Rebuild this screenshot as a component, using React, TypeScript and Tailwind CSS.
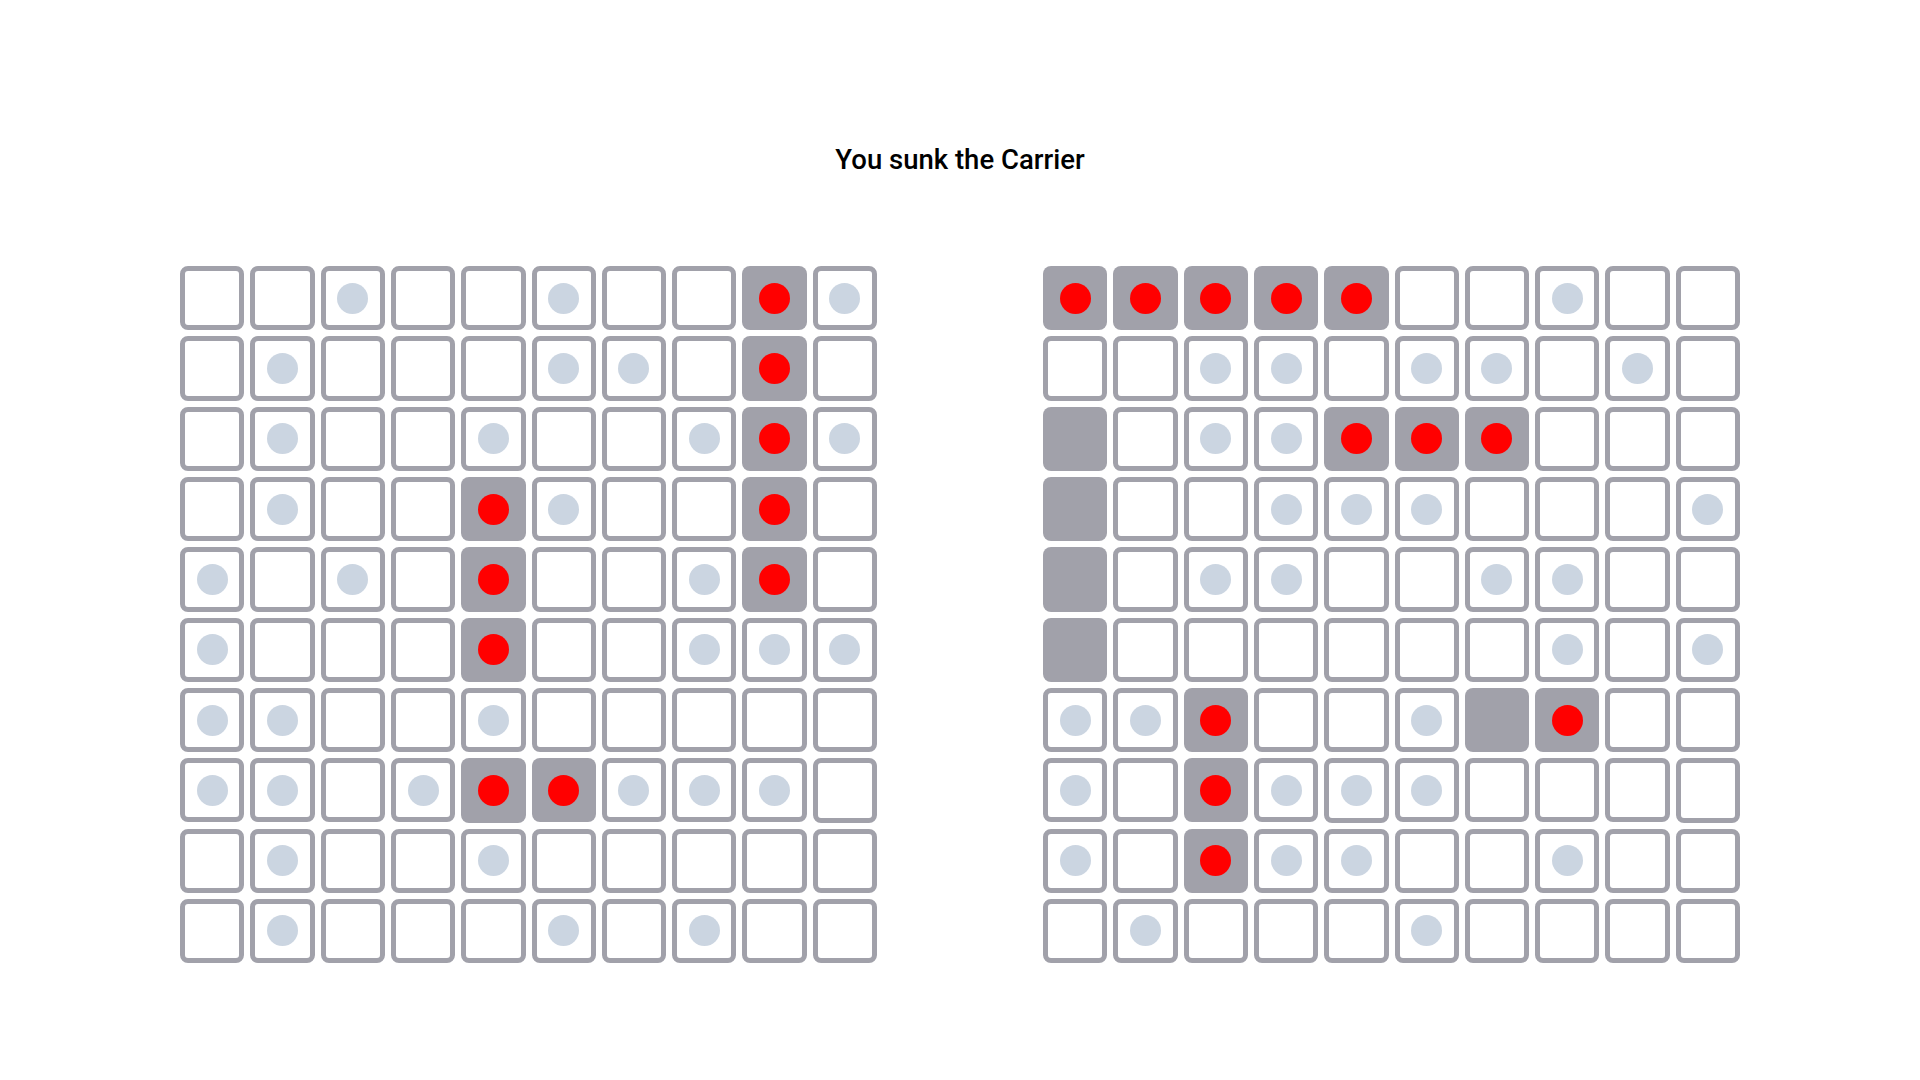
import React from "react";

// . empty, o miss, x hit, s ship (not hit)
const playerBoard = [
	"..o..o..xo",
	".o...oo.x.",
	".o..o..oxo",
	".o..xo..x.",
	"o.o.x..ox.",
	"o...x..ooo",
	"oo..o.....",
	"oo.oxxooo.",
	".o..o.....",
	".o...o.o..",
];

const enemyBoard = [
	"xxxxx..o..",
	"..oo.oo.o.",
	"s.ooxxx...",
	"s..ooo...o",
	"s.oo..oo..",
	"s......o.o",
	"oox..osx..",
	"o.xooo....",
	"o.xoo..o..",
	".o...o....",
];

function Cell({ value }: { value: string }) {
	const filled = value == "x" || value == "s";
	return (
		<div
			className={
				"aspect-square rounded-lg flex items-center justify-center " +
				(filled
					? "bg-[#a1a1aa]"
					: "bg-white border-[5px] border-[#a1a1aa]")
			}
		>
			{value == "x" && (
				<div className="w-[31px] h-[31px] rounded-full bg-[#ff0000]"></div>
			)}
			{value == "o" && (
				<div className="w-[31px] h-[31px] rounded-full bg-[#cbd5e1]"></div>
			)}
		</div>
	);
}

function Board({ rows }: { rows: string[] }) {
	return (
		<div className="grid grid-cols-10 gap-[6px] w-[697px]">
			{rows.map((row, r) =>
				row.split("").map((v, c) => <Cell key={r + "-" + c} value={v} />)
			)}
		</div>
	);
}

export default function App() {
	return (
		<div
			className="flex flex-col items-center w-full min-h-screen bg-white pt-[142px]"
			style={{ fontFamily: "Roboto, 'Liberation Sans', sans-serif" }}
		>
			<h1 className="text-[27.5px] leading-[36px] font-medium text-black">
				You sunk the Carrier
			</h1>
			<div className="flex flex-row gap-[166px] mt-[88px]">
				<Board rows={playerBoard} />
				<Board rows={enemyBoard} />
			</div>
		</div>
	);
}
